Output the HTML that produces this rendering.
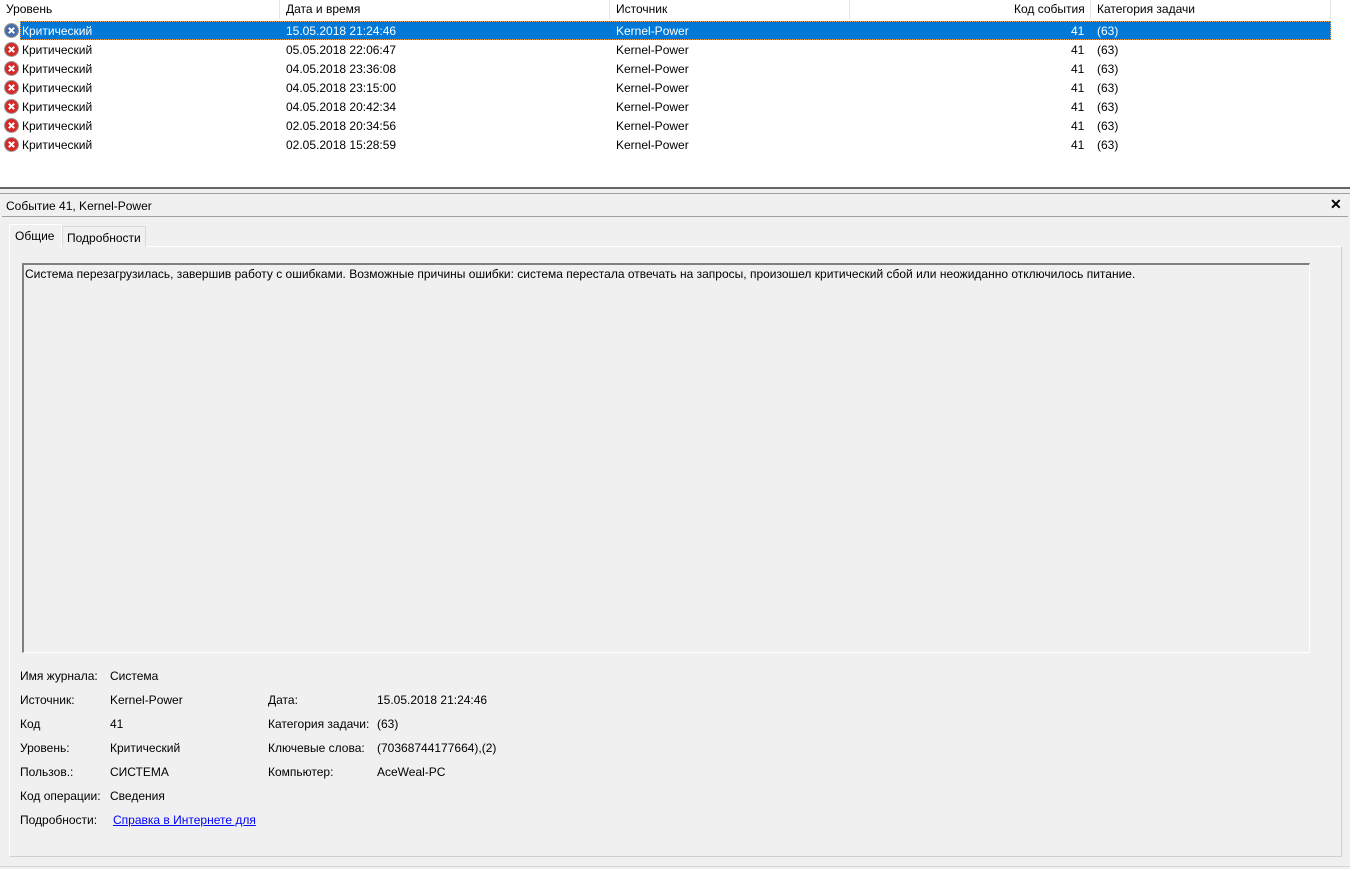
<!DOCTYPE html>
<html><head><meta charset="utf-8"><style>
*{margin:0;padding:0;box-sizing:border-box}
body{width:1350px;height:869px;background:#fff;font-family:"Liberation Sans",sans-serif;font-size:12px;color:#000;position:relative;overflow:hidden}
.a{position:absolute;white-space:nowrap;line-height:14px}
.hs{position:absolute;top:0;width:1px;height:19px;background:#e5e5e5}
.row{position:absolute;left:0;width:1350px;height:19px}
.ic{position:absolute;left:4px;top:2px;width:15px;height:15px}
</style></head><body>
<div class="a" style="left:6px;top:2px">Уровень</div>
<div class="hs" style="left:279px"></div>
<div class="a" style="left:286px;top:2px">Дата и время</div>
<div class="hs" style="left:609px"></div>
<div class="a" style="left:616px;top:2px">Источник</div>
<div class="hs" style="left:849px"></div>
<div class="a" style="left:1014px;top:2px">Код события</div>
<div class="hs" style="left:1090px"></div>
<div class="a" style="left:1097px;top:2px">Категория задачи</div>
<div class="hs" style="left:1330px"></div>

<div style="position:absolute;left:20px;top:21px;width:1311px;height:19px;background:#0078d7;border:1px dotted #f0a050"></div>

<div id="rows"></div>
<script>
var d=["15.05.2018 21:24:46","05.05.2018 22:06:47","04.05.2018 23:36:08","04.05.2018 23:15:00","04.05.2018 20:42:34","02.05.2018 20:34:56","02.05.2018 15:28:59"];
var h="";
for(var i=0;i<7;i++){var y=21+i*19;var c=i==0?"#fff":"#000";var f=i==0?"#4a6fa8":"#d42a2a";
h+='<div class="row" style="top:'+y+'px;color:'+c+'"><svg class="ic" viewBox="0 0 15 15"><circle cx="7.5" cy="7.5" r="7" fill="'+f+'" stroke="#999" stroke-width="1"/><path d="M4.8 4.8L10.2 10.2M10.2 4.8L4.8 10.2" stroke="#fff" stroke-width="2"/></svg>'+
'<div class="a" style="left:22px;top:3px">Критический</div><div class="a" style="left:286px;top:3px">'+d[i]+'</div><div class="a" style="left:616px;top:3px">Kernel-Power</div><div class="a" style="left:1071px;top:3px">41</div><div class="a" style="left:1097px;top:3px">(63)</div></div>';}
document.getElementById("rows").innerHTML=h;
</script>

<div style="position:absolute;left:0;top:187px;width:1350px;height:682px;background:#f0f0f0;border-top:2px solid #666"></div>
<div style="position:absolute;left:0;top:193px;width:1350px;height:1px;background:#a0a0a0"></div>
<div style="position:absolute;left:2px;top:216px;width:1346px;height:1px;background:#a0a0a0"></div>
<div class="a" style="left:6px;top:199px">Событие 41, Kernel-Power</div>
<div class="a" style="left:1330px;top:197px;font-weight:bold;font-size:14px">✕</div>

<div style="position:absolute;left:9px;top:246px;width:1333px;height:611px;border:1px solid #fff;border-right-color:#d0d0d0;border-bottom-color:#d0d0d0;background:#f0f0f0"></div>
<div style="position:absolute;left:62px;top:226px;width:84px;height:21px;border:1px solid #d9d9d9;border-bottom:none;background:#f0f0f0"></div>
<div class="a" style="left:67px;top:231px">Подробности</div>
<div style="position:absolute;left:9px;top:224px;width:53px;height:24px;border:1px solid #fff;border-bottom:none;background:#f0f0f0"></div>
<div class="a" style="left:15px;top:229px">Общие</div>

<div style="position:absolute;left:22px;top:263px;width:1288px;height:390px;border:1px solid #fff;border-top:2px solid #808080;border-left:2px solid #808080;background:#f0f0f0"></div>
<div class="a" style="left:25px;top:267px">Система перезагрузилась, завершив работу с ошибками. Возможные причины ошибки: система перестала отвечать на запросы, произошел критический сбой или неожиданно отключилось питание.</div>

<div class="a" style="left:20px;top:669px">Имя журнала:</div><div class="a" style="left:110px;top:669px">Система</div>
<div class="a" style="left:20px;top:693px">Источник:</div><div class="a" style="left:110px;top:693px">Kernel-Power</div>
<div class="a" style="left:20px;top:717px">Код</div><div class="a" style="left:110px;top:717px">41</div>
<div class="a" style="left:20px;top:741px">Уровень:</div><div class="a" style="left:110px;top:741px">Критический</div>
<div class="a" style="left:20px;top:765px">Пользов.:</div><div class="a" style="left:110px;top:765px">СИСТЕМА</div>
<div class="a" style="left:20px;top:789px">Код операции:</div><div class="a" style="left:110px;top:789px">Сведения</div>
<div class="a" style="left:20px;top:813px">Подробности:</div><div class="a" style="left:113px;top:813px;color:#0000ff;text-decoration:underline">Справка в Интернете для </div>
<div class="a" style="left:268px;top:693px">Дата:</div><div class="a" style="left:377px;top:693px">15.05.2018 21:24:46</div>
<div class="a" style="left:268px;top:717px">Категория задачи:</div><div class="a" style="left:377px;top:717px">(63)</div>
<div class="a" style="left:268px;top:741px">Ключевые слова:</div><div class="a" style="left:377px;top:741px">(70368744177664),(2)</div>
<div class="a" style="left:268px;top:765px">Компьютер:</div><div class="a" style="left:377px;top:765px">AceWeal-PC</div>
<div style="position:absolute;left:0;top:866px;width:1350px;height:1px;background:#d8d8d8"></div>
</body></html>
